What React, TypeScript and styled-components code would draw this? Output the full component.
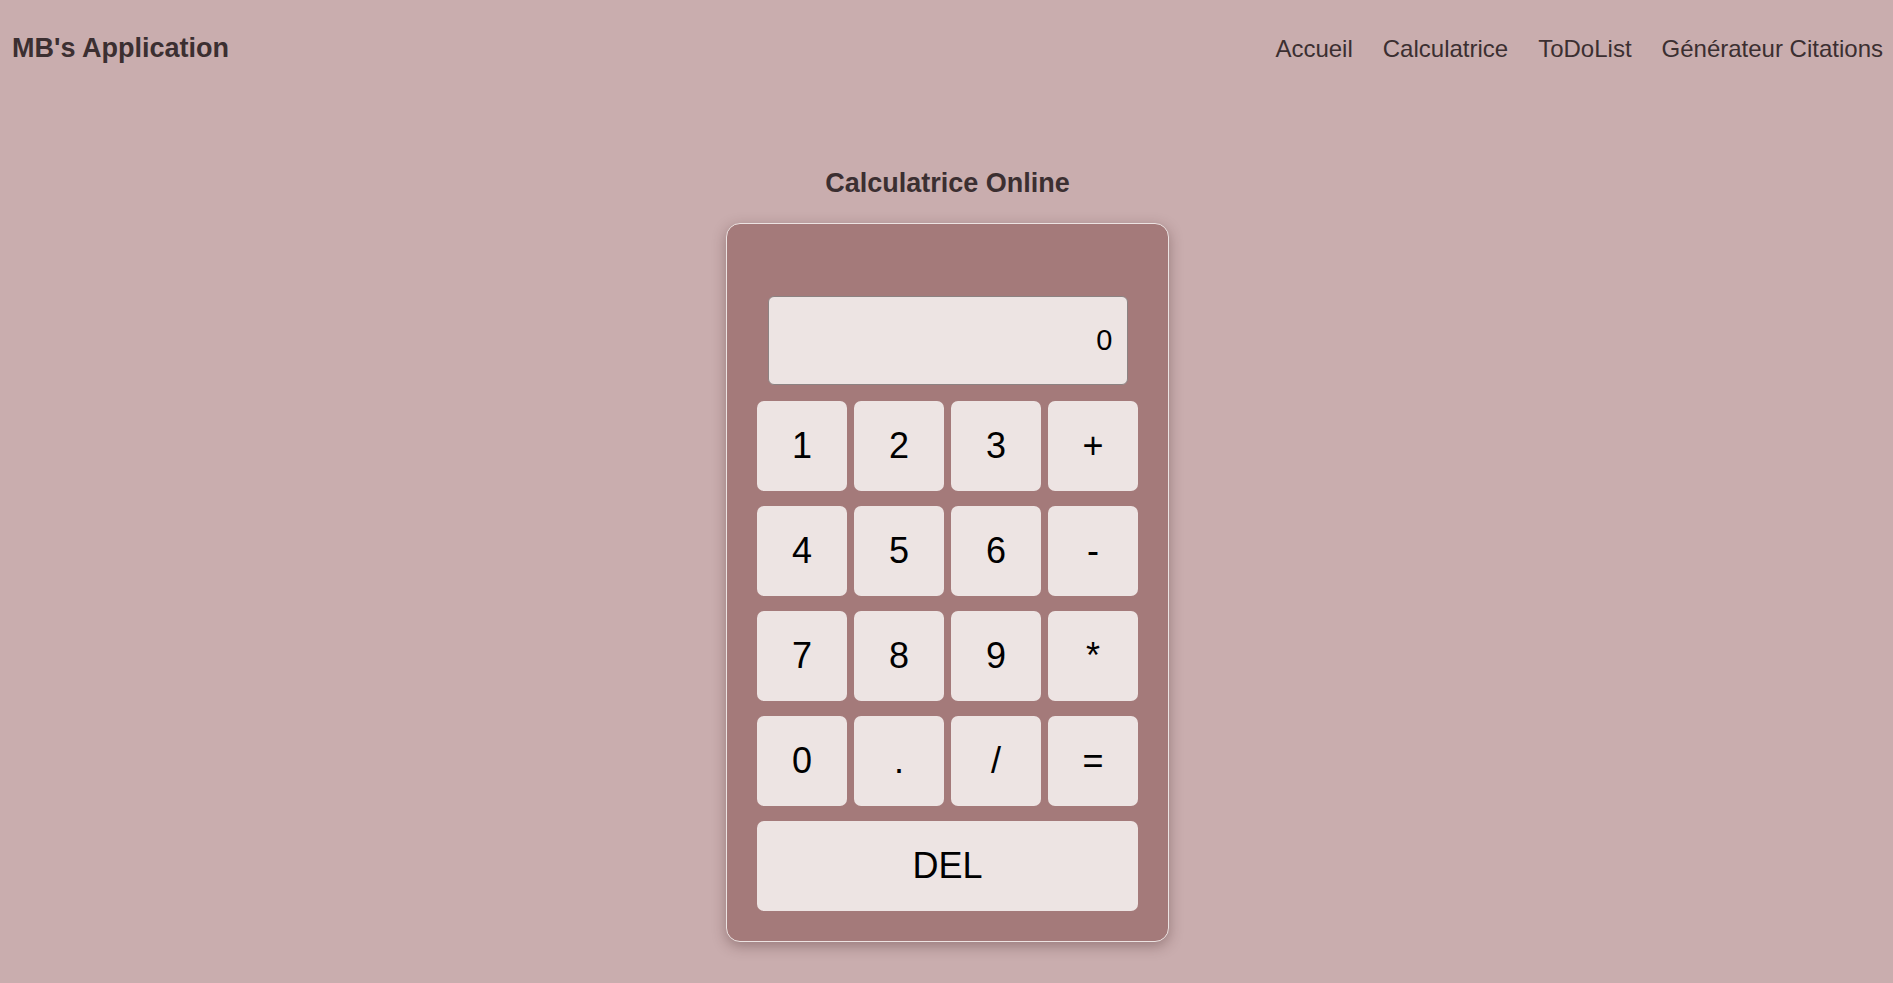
import React from "react";
import styled, { createGlobalStyle } from "styled-components";

const GlobalStyle = createGlobalStyle`
  html, body {
    margin: 0;
    padding: 0;
    background: #c9adae;
    font-family: "Liberation Sans", Arial, sans-serif;
  }
`;

const Page = styled.div`
  min-height: 983px;
  background: #c9adae;
  color: #3b2f31;
`;

const Header = styled.header`
  display: flex;
  justify-content: space-between;
  align-items: baseline;
  padding: 33px 10px 0 12px;
`;

const Brand = styled.h1`
  margin: 0;
  font-size: 27px;
  font-weight: 700;
  color: #3b2f31;
`;

const Nav = styled.nav`
  display: flex;
  gap: 30px;
`;

const NavLink = styled.a`
  font-size: 24px;
  color: #3b2f31;
  text-decoration: none;
`;

const Main = styled.main`
  display: flex;
  flex-direction: column;
  align-items: center;
  padding-top: 104px;
`;

const Title = styled.h2`
  margin: 0 0 24px 0;
  font-size: 27px;
  font-weight: 700;
  color: #3b2f31;
  transform: translateX(1px);
`;

const Card = styled.div`
  width: 381px;
  padding: 72px 30px 30px 30px;
  background: #a47a7a;
  border: 1px solid #ece3e2;
  border-radius: 14px;
  box-shadow: 0 4px 14px rgba(60, 30, 30, 0.35);
  display: flex;
  flex-direction: column;
  align-items: center;
  transform: translateX(1px);
`;

const Display = styled.div`
  box-sizing: border-box;
  width: 360px;
  height: 89px;
  margin-bottom: 16px;
  padding: 0 14px;
  background: #ede4e3;
  border: 1px solid #8c8282;
  border-radius: 6px;
  display: flex;
  align-items: center;
  justify-content: flex-end;
  font-size: 29px;
  color: #000;
`;

const Keys = styled.div`
  display: grid;
  grid-template-columns: repeat(4, 90px);
  grid-auto-rows: 90px;
  column-gap: 7px;
  row-gap: 15px;
`;

const Key = styled.button<{ $wide?: boolean }>`
  grid-column: ${(p) => (p.$wide ? "1 / -1" : "auto")};
  border: none;
  border-radius: 7px;
  background: #ede4e3;
  color: #000;
  font-family: "Liberation Sans", Arial, sans-serif;
  font-size: 36px;
  padding: 0;
  cursor: pointer;
`;

const keys = ["1", "2", "3", "+", "4", "5", "6", "-", "7", "8", "9", "*", "0", ".", "/", "="];

export default function App() {
  return (
    <Page>
      <GlobalStyle />
      <Header>
        <Brand>MB's Application</Brand>
        <Nav>
          <NavLink href="#">Accueil</NavLink>
          <NavLink href="#">Calculatrice</NavLink>
          <NavLink href="#">ToDoList</NavLink>
          <NavLink href="#">Générateur Citations</NavLink>
        </Nav>
      </Header>
      <Main>
        <Title>Calculatrice Online</Title>
        <Card>
          <Display>0</Display>
          <Keys>
            {keys.map((k) => (
              <Key key={k}>{k}</Key>
            ))}
            <Key $wide>DEL</Key>
          </Keys>
        </Card>
      </Main>
    </Page>
  );
}
